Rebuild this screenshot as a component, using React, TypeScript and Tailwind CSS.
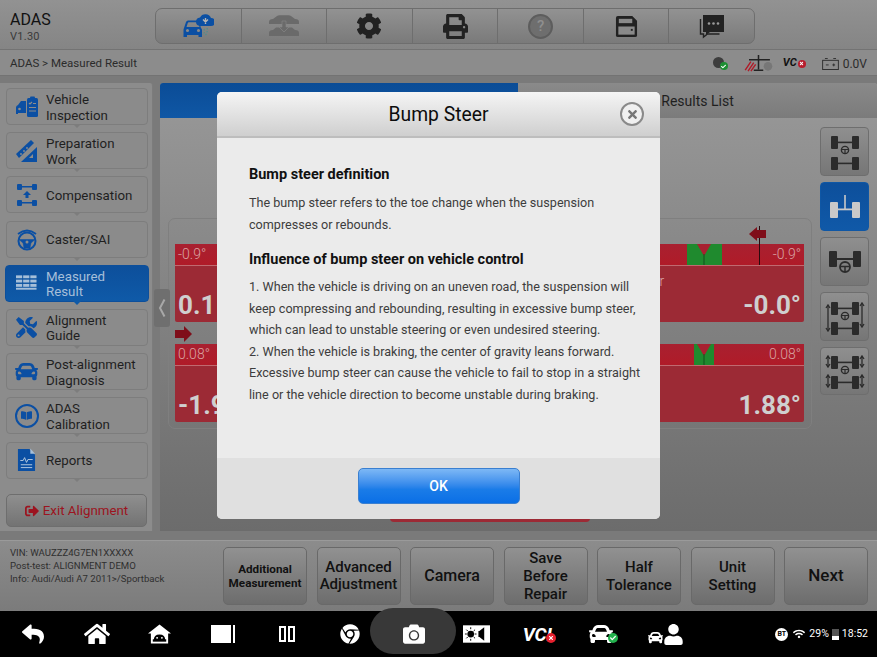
import type { ReactNode } from "react";
import { FaCog, FaPrint, FaCar, FaTools, FaBookOpen, FaReply, FaHome, FaCamera, FaChrome, FaWifi, FaSignOutAlt, FaTimes, FaUser, FaCheck } from "react-icons/fa";

const BLUE = "#0b4fa3";

function Axle({ steer, y = 0 }: { steer?: boolean; y?: number }) {
  return (
    <g transform={`translate(0 ${y})`}>
      <rect x="2" y="0" width="7" height="13" rx="1" />
      <rect x="23" y="0" width="7" height="13" rx="1" />
      <rect x="9" y="5.6" width="14" height="1.6" />
      {steer && (
        <g>
          <circle cx="16" cy="14" r="3.6" fill="none" stroke="currentColor" strokeWidth="1.4" />
          <path d="M12.500 13.500h7M16 14v3.500" stroke="currentColor" strokeWidth="1.200" />
        </g>
      )}
    </g>
  );
}

function FourWheel() {
  return (
    <svg viewBox="0 0 32 36" className="w-8 h-9 text-[#2b2b2b]" fill="currentColor">
      <Axle steer y={2} />
      <Axle y={23} />
    </svg>
  );
}

function TiltWheels({ spread }: { spread?: boolean }) {
  return (
    <svg viewBox="0 0 40 36" className="w-10 h-9 text-[#2b2b2b]" fill="currentColor">
      <g transform="translate(4 0)">
        <Axle steer y={3} />
        <Axle y={23} />
      </g>
      {spread ? (
        <g stroke="currentColor" strokeWidth="1.3">
          <path d="M3 4v9M37 4v9M3 23v10M37 23v10" />
          <path d="M1 6l2-3 2 3M1 11l2 3 2-3M35 6l2-3 2 3M35 11l2 3 2-3M1 25l2-3 2 3M1 31l2 3 2-3M35 25l2-3 2 3M35 31l2 3 2-3" fill="none" />
        </g>
      ) : (
        <g stroke="currentColor" strokeWidth="1.3">
          <path d="M3 7v24M37 5v22" />
          <path d="M1 9l2-3 2 3M1 29l2 3 2-3M35 7l2-3 2 3M35 25l2 3 2-3" fill="none" />
        </g>
      )}
    </svg>
  );
}

function CarCloudIcon() {
  return (
    <svg viewBox="0 0 32 26" className="w-[32px] h-[26px]" fill={BLUE}>
      <path d="M2 15l2-6q.6-1.5 2-1.5h9q1.4 0 2 1.5l2 6q1 .8 1 2v7h-3.500v-2H5v2H1.500v-7q0-1.200.5-2zM4.500 14h13l-1.300-4q-.2-.7-1-.7H6.800q-.8 0-1 .7z" />
      <circle cx="5.500" cy="17.500" r="1.500" fill="#8a8a8a" />
      <circle cx="16.500" cy="17.500" r="1.500" fill="#8a8a8a" />
      <path d="M14 9a4.500 4.500 0 0 1 4-4.500 6 6 0 0 1 11 .5 4 4 0 0 1 0 8H18q-4-.5-4-4z" />
      <path d="M23.500 5v6M21 6.500l2.500 2.500 2.500-2.500" stroke="#b5b5b5" strokeWidth="1.400" fill="none" />
      <path d="M22 16q1 3-1 6M25 15q1 4-2 8" stroke="#4a8f8f" strokeWidth="1.200" strokeDasharray="1.500 1.500" fill="none" />
    </svg>
  );
}

function CarsDownIcon() {
  return (
    <svg viewBox="0 0 32 26" className="w-8 h-[26px]" fill="#6a6a6a">
      <path d="M1 9q0-3 4-3l4-3q1-.8 2.500-.8h9q1.500 0 2.500.8l4 3q4 0 4 3v2H1z" />
      <path d="M1 20q0-3 4-3l3-2.500 3.500 0L16 19l4.500-4.500h3.500l3 2.500q4 0 4 3v3H1z" />
      <path d="M14 8h4v6h3l-5 5-5-5h3z" fill="#6a6a6a" stroke="#888" strokeWidth=".6" />
    </svg>
  );
}

function HelpIcon() {
  return (
    <div className="w-[25px] h-[25px] rounded-full border-2 border-[#5d5d5d] bg-[#6e6e6e] flex items-center justify-center text-[#8f8f8f] text-[15px] font-medium">?</div>
  );
}

function SaveIcon() {
  return (
    <svg viewBox="0 0 24 24" className="w-[23px] h-[23px]">
      <path d="M1 3q0-2 2-2h15l5 5v15q0 2-2 2H3q-2 0-2-2z" fill="#222" />
      <rect x="4" y="4" width="14" height="4.500" fill="#8a8a8a" />
      <rect x="3.500" y="12" width="17" height="8.500" fill="#8a8a8a" />
      <rect x="16.500" y="14.500" width="2" height="2" fill="#222" />
    </svg>
  );
}

function ChatIcon() {
  return (
    <svg viewBox="0 0 26 25" className="w-[26px] h-[25px]">
      <path d="M4 1h21v17H11l-4 3v-3H4z" fill="#222" />
      <path d="M1.500 5v15h3v3l4-3h12" fill="none" stroke="#222" strokeWidth="1.400" />
      <circle cx="10" cy="9.500" r="1.300" fill="#9a9a9a" />
      <circle cx="14.500" cy="9.500" r="1.300" fill="#9a9a9a" />
      <circle cx="19" cy="9.500" r="1.300" fill="#9a9a9a" />
    </svg>
  );
}

function InspectIcon() {
  return (
    <svg viewBox="0 0 24 24" className="w-6 h-6" fill={BLUE}>
      <path d="M11 6H6L3 10q-2 .5-2 2.500V19h2v-1h8z" />
      <circle cx="4.500" cy="14" r="1.300" fill="#8c8c8c" />
      <rect x="12" y="3" width="11" height="19" rx="1.500" />
      <rect x="15" y="1.500" width="5" height="3" rx="1" />
      <path d="M14 8l1 1 2-2M18 8.500h3M14 12.500h7M14 16h7" stroke="#8c8c8c" strokeWidth="1.200" fill="none" />
    </svg>
  );
}

function RulerIcon() {
  return (
    <svg viewBox="0 0 24 24" className="w-6 h-6" fill={BLUE}>
      <path d="M1 15L16 1l3 3L4 19z" />
      <path d="M22 8v15H6z" />
      <path d="M18 15v4h-4z" fill="#8c8c8c" />
      <circle cx="6" cy="15" r=".9" fill="#8c8c8c" />
      <circle cx="9" cy="12" r=".9" fill="#8c8c8c" />
      <circle cx="12" cy="9" r=".9" fill="#8c8c8c" />
    </svg>
  );
}

function CompensationIcon() {
  return (
    <svg viewBox="0 0 24 24" className="w-6 h-6" fill={BLUE}>
      <rect x="2" y="1" width="5" height="6" rx="1" />
      <rect x="17" y="1" width="5" height="6" rx="1" />
      <rect x="2" y="17" width="5" height="6" rx="1" />
      <rect x="17" y="17" width="5" height="6" rx="1" />
      <rect x="7" y="3" width="10" height="1.500" />
      <rect x="7" y="19" width="10" height="1.500" />
      <path d="M12 8l4 4h-2.500v3h-3v-3H8z" />
    </svg>
  );
}

function WheelIcon() {
  return (
    <svg viewBox="0 0 24 24" className="w-6 h-7" fill="none" stroke={BLUE}>
      <path d="M3 7q9-7 18 0" strokeWidth="1.800" />
      <circle cx="12" cy="14" r="8.500" strokeWidth="2" />
      <path d="M4 12.500h16l-4 3.500-1 5h-6l-1-5z" fill={BLUE} strokeWidth=".5" />
      <circle cx="12" cy="15" r="1.500" fill="#8c8c8c" stroke="none" />
    </svg>
  );
}

function TableIcon() {
  return (
    <svg viewBox="0 0 22 16" className="w-[21px] h-4" fill="#a6bfd9">
      <rect x="0" y="0" width="6.500" height="3" />
      <rect x="7.500" y="0" width="6.500" height="3" />
      <rect x="15" y="0" width="6.500" height="3" />
      <rect x="0" y="4.500" width="6.500" height="3" />
      <rect x="7.500" y="4.500" width="6.500" height="3" />
      <rect x="15" y="4.500" width="6.500" height="3" />
      <rect x="0" y="9" width="6.500" height="3" />
      <rect x="7.500" y="9" width="6.500" height="3" />
      <rect x="15" y="9" width="6.500" height="3" />
      <rect x="0" y="13" width="21.500" height="2" />
    </svg>
  );
}

function BookCircleIcon() {
  return (
    <div className="w-6 h-6 rounded-full border-2 border-[#0b4fa3] flex items-center justify-center">
      <FaBookOpen className="text-[#0b4fa3] text-[11px]" />
    </div>
  );
}

function ReportIcon() {
  return (
    <svg viewBox="0 0 20 25" className="w-[19px] h-6" fill={BLUE}>
      <path d="M1 1h12l6 6v17H1z" />
      <path d="M14 0.500l5 5.500h-5z" fill="#a6bfd9" />
      <path d="M3.500 13h3l1.500-3 2 5 1.500-3h5M4 17.500h12M4 20.500h12" stroke="#b7cbe0" strokeWidth="1" fill="none" />
    </svg>
  );
}

function DroidHomeIcon() {
  return (
    <svg viewBox="0 0 24 20" className="w-[23px] h-[20px]">
      <path d="M12 0L0 9.500h3V20h18V9.500h3z" fill="#fff" />
      <path d="M6 16.500q0-6 6-6t6 6z" fill="#000" />
      <rect x="5" y="15.500" width="14" height="2.500" fill="#000" />
      <circle cx="9.500" cy="14" r="1" fill="#fff" />
      <circle cx="14.500" cy="14" r="1" fill="#fff" />
    </svg>
  );
}

const sideItems: { label: ReactNode; icon: ReactNode; active?: boolean }[] = [
  { label: <>Vehicle<br />Inspection</>, icon: <InspectIcon /> },
  { label: <>Preparation<br />Work</>, icon: <RulerIcon /> },
  { label: "Compensation", icon: <CompensationIcon /> },
  { label: "Caster/SAI", icon: <WheelIcon /> },
  { label: <>Measured<br />Result</>, icon: <TableIcon />, active: true },
  { label: <>Alignment<br />Guide</>, icon: <FaTools className="text-[#0b4fa3] text-[21px]" /> },
  { label: <>Post-alignment<br />Diagnosis</>, icon: <FaCar className="text-[#0b4fa3] text-[23px]" /> },
  { label: <>ADAS<br />Calibration</>, icon: <BookCircleIcon /> },
  { label: "Reports", icon: <ReportIcon /> },
];

const topTools: ReactNode[] = [
  <CarCloudIcon />,
  <CarsDownIcon />,
  <FaCog className="text-[#222] text-[26px]" />,
  <FaPrint className="text-[#222] text-[25px]" />,
  <HelpIcon />,
  <SaveIcon />,
  <ChatIcon />,
];

const bottomButtons: { label: ReactNode; cls: string }[] = [
  { label: <>Additional<br />Measurement</>, cls: "text-[11.700px] leading-[14px] font-bold" },
  { label: <>Advanced<br />Adjustment</>, cls: "text-[15px] leading-[17px] font-medium" },
  { label: "Camera", cls: "text-[16px] font-medium" },
  { label: <>Save<br />Before<br />Repair</>, cls: "text-[15px] leading-[18px] font-medium" },
  { label: <>Half<br />Tolerance</>, cls: "text-[15px] leading-[18px] font-medium" },
  { label: <>Unit<br />Setting</>, cls: "text-[15px] leading-[18px] font-medium" },
  { label: "Next", cls: "text-[17px] font-medium" },
];

function Bar({ side, hdr, value, children }: { side: "l" | "r"; hdr: string; value: string; children?: ReactNode }) {
  return (
    <div className="flex-1 h-[78px] bg-[#9c2a35] rounded-[2px] flex flex-col">
      <div className={`h-[22px] relative bg-gradient-to-b from-[#a82030] to-[#b01b28] border-b border-[#c06a70] flex items-center text-[14px] font-light text-[#d9a3a3] px-[3px] ${side === "r" ? "justify-end" : ""}`}>
        {children}
        {hdr}
      </div>
      <div className={`flex-1 flex items-end pb-[2px] text-[#cfcfcf] text-[26px] leading-[30px] font-bold px-[3px] ${side === "r" ? "justify-end" : ""}`}>
        {value}
      </div>
    </div>
  );
}

function Green({ x, w }: { x: string; w: string }) {
  return (
    <div className={`absolute top-0 bottom-0 bg-[#1f8a2e] ${x} ${w}`}>
      <div className="absolute left-1/2 -translate-x-1/2 top-0 w-0 h-0 border-l-[7px] border-r-[7px] border-t-[12px] border-l-transparent border-r-transparent border-t-[#a82030]" />
      <div className="absolute left-1/2 -translate-x-1/2 top-[10px] bottom-0 w-px bg-[#14501d]" />
    </div>
  );
}

export default function App() {
  return (
    <div className="relative w-[877px] h-[657px] overflow-hidden bg-[#7a7a7a] text-[#1c1c1c] font-['Roboto',sans-serif]">
      {/* title bar */}
      <div className="h-[50px] flex bg-gradient-to-b from-[#929292] to-[#858585] border-b border-[#737373]">
        <div className="w-[155px] pl-[10px] pt-[11px]">
          <div className="text-[16px] leading-[18px] text-[#111]">ADAS</div>
          <div className="text-[11px] leading-[16px] text-[#3a3a3a] tracking-wide">V1.30</div>
        </div>
        <div className="mt-[8px] h-[36px] w-[600px] flex rounded-[7px] border border-[#6e6e6e] overflow-hidden bg-gradient-to-b from-[#929292] to-[#7a7a7a]">
          {topTools.map((t, i) => (
            <div key={i} className="flex-1 flex items-center justify-center border-r border-[#6e6e6e] last:border-r-0">{t}</div>
          ))}
        </div>
      </div>

      {/* breadcrumb */}
      <div className="h-[26px] flex items-center pl-[10px] pr-[10px] pt-[2px] bg-[#8c8c8c] border-b border-[#737373] text-[11.500px] text-[#2b2b2b]">
        <span>ADAS &gt; Measured Result</span>
        <div className="ml-auto flex items-center">
          <div className="relative w-[15px] h-[13px] mr-[15px]">
            <div className="w-[11px] h-[11px] rounded-full bg-[#3d3d3d]" />
            <div className="absolute right-0 bottom-0 w-[8px] h-[8px] rounded-full bg-[#1d8f33] flex items-center justify-center"><FaCheck className="text-white text-[5px]" /></div>
          </div>
          <svg viewBox="0 0 32 20" className="w-[31px] h-[19px] mr-[9px]">
            <path d="M16 1v15M6 6h22M11 17h10" stroke="#222" strokeWidth="1.600" fill="none" />
            <path d="M2 17l6-9M5 18l6-9M8 18l5-7" stroke="#b01b28" strokeWidth="1.500" />
            <circle cx="26" cy="13" r="4.500" fill="#777" />
          </svg>
          <span className="text-[11px] font-bold italic text-[#111] mr-[1px]">VC</span>
          <div className="w-[8px] h-[8px] rounded-full bg-[#b81c2c] mr-[16px] flex items-center justify-center"><FaTimes className="text-white text-[5px]" /></div>
          <svg viewBox="0 0 18 13" className="w-[17px] h-[12px] mr-[4px]" fill="none" stroke="#2b2b2b" strokeWidth="1">
            <rect x=".5" y="2.500" width="17" height="10" />
            <path d="M3 .5h3M12 .5h3M4 7.500h3M11 7.500h3M12.500 6v3" />
          </svg>
          <span className="text-[12px] text-[#2b2b2b]">0.0V</span>
        </div>
      </div>

      {/* main area */}
      <div className="h-[464px] flex pt-[7px] pb-[9px]">
        <div className="w-[153px] bg-[#8c8c8c] pt-[5px] pl-[6px] pr-[4px] rounded-tr-[3px] flex flex-col gap-[7.2px] border-r border-[#7c7c7c]">
          {sideItems.map((it, i) => (
            <div
              key={i}
              className={`relative h-[37px] shrink-0 flex items-center rounded-[4px] border ${it.active ? "-mx-[1px] pl-[1px] bg-gradient-to-b from-[#0d4f9b] to-[#0f5aa8] border-[#0d4f9b] text-[#a6bfd9]" : "bg-[#8b8b8b] border-[#7d7d7d] text-[#1f1f1f]"}`}
            >
              <div className="w-[39px] flex items-center justify-center shrink-0">{it.icon}</div>
              <div className="text-[13.300px] leading-[15.500px] pt-[2px]">{it.label}</div>
              <div className={`absolute left-1/2 -translate-x-1/2 -bottom-[4px] w-0 h-0 border-l-[4px] border-r-[4px] border-t-[4px] border-l-transparent border-r-transparent ${it.active ? "border-t-[#0f5aa8]" : "border-t-[#7d7d7d]"}`} />
            </div>
          ))}
          <div className="mt-[8px] h-[33px] w-[141px] flex items-center justify-center gap-[4px] pt-[2px] rounded-[5px] border border-[#6e6e6e] bg-gradient-to-b from-[#8f8f8f] to-[#737373] text-[#9c1420] text-[13.300px]">
            <FaSignOutAlt className="text-[14px]" />
            <span>Exit Alignment</span>
          </div>
        </div>

        <div className="flex-1 ml-[7px] flex flex-col rounded-t-[3px] overflow-hidden bg-gradient-to-b from-[#999999] to-[#6c6c6c]">
          <div className="h-[35px] shrink-0 flex">
            <div className="w-[358px] bg-gradient-to-b from-[#0b4c96] to-[#0f57a5]" />
            <div className="flex-1 flex items-center justify-center pt-[2px] bg-gradient-to-b from-[#8a8a8a] to-[#7b7b7b] text-[14px] text-[#1f1f1f]">Results List</div>
          </div>
          <div className="flex-1 flex pl-[8px]">
            <div className="w-[644px] pt-[100px] flex flex-col items-center">
              <div className="relative w-full h-[211px] rounded-[7px] border border-[#7f7f7f] pt-[25px] pl-[6px] pr-[7px] flex flex-col gap-[22px]">
                <div className="flex gap-[10px]">
                  <Bar side="l" hdr="-0.9°" value="0.1" />
                  <Bar side="r" hdr="-0.9°" value="-0.0°">
                    <Green x="left-[192px]" w="w-[35px]" />
                    <div className="absolute left-[264px] -top-[18px] bottom-0 w-px bg-[#2a0a0e]" />
                    <div className="absolute left-[254px] -top-[17px] flex items-center">
                      <div className="w-0 h-0 border-y-[7px] border-y-transparent border-r-[8px] border-r-[#7f0e1a]" />
                      <div className="w-[9px] h-[8px] bg-[#7f0e1a]" />
                    </div>
                    <span className="absolute left-[165px] top-[27px] text-[14px] text-[#d9a3a3]">r</span>
                  </Bar>
                </div>
                <div className="flex gap-[10px]">
                  <Bar side="l" hdr="0.08°" value="-1.90°" />
                  <Bar side="r" hdr="0.08°" value="1.88°">
                    <Green x="left-[199px]" w="w-[20px]" />
                  </Bar>
                </div>
                <div className="absolute left-[6px] top-[107px] flex items-center">
                  <div className="w-[9px] h-[8px] bg-[#7f0e1a]" />
                  <div className="w-0 h-0 border-y-[8px] border-y-transparent border-l-[8px] border-l-[#7f0e1a]" />
                </div>
              </div>
              <div className="mt-[61px] w-[200px] h-[32px] rounded-[4px] bg-[#9c2a35]" />
            </div>
            <div className="ml-[8px] pt-[9px] flex flex-col gap-[6px]">
              <div className="w-[49px] h-[49px] rounded-[4px] border border-[#6e6e6e] bg-gradient-to-b from-[#8f8f8f] to-[#767676] flex items-center justify-center"><FourWheel /></div>
              <div className="w-[49px] h-[49px] rounded-[4px] border border-[#0f57a5] bg-gradient-to-b from-[#0d4f9b] to-[#1059a8] flex items-center justify-center">
                <svg viewBox="0 0 32 26" className="w-8 h-[26px]" fill="#c9c9c9">
                  <rect x="1" y="8" width="8" height="16" rx="1" />
                  <rect x="23" y="8" width="8" height="16" rx="1" />
                  <rect x="9" y="14.500" width="14" height="1.800" />
                  <rect x="15.200" y="1" width="1.600" height="14" />
                </svg>
              </div>
              <div className="w-[49px] h-[49px] rounded-[4px] border border-[#6e6e6e] bg-gradient-to-b from-[#8f8f8f] to-[#767676] flex items-center justify-center">
                <svg viewBox="0 0 34 24" className="w-[34px] h-6 text-[#2b2b2b]" fill="currentColor">
                  <rect x="1" y="1" width="8" height="16" rx="1" />
                  <rect x="25" y="1" width="8" height="16" rx="1" />
                  <rect x="9" y="8" width="16" height="2" />
                  <circle cx="17" cy="17" r="5" fill="none" stroke="currentColor" strokeWidth="1.800" />
                  <path d="M12.500 16.500h9M17 17v5" stroke="currentColor" strokeWidth="1.500" />
                </svg>
              </div>
              <div className="w-[49px] h-[49px] rounded-[4px] border border-[#6e6e6e] bg-gradient-to-b from-[#8f8f8f] to-[#767676] flex items-center justify-center"><TiltWheels /></div>
              <div className="w-[49px] h-[48px] rounded-[4px] border border-[#6e6e6e] bg-gradient-to-b from-[#8f8f8f] to-[#767676] flex items-center justify-center"><TiltWheels spread /></div>
            </div>
          </div>
        </div>
      </div>

      {/* sidebar collapse handle */}
      <div className="absolute left-[154px] top-[289px] w-[16px] h-[38px] rounded-[3px] bg-[#6f6f6f] flex items-center justify-center">
        <svg viewBox="0 0 8 20" className="w-[8px] h-[20px]" fill="none" stroke="#a8a8a8" strokeWidth="2">
          <path d="M6.500 1.500L2 10l4.500 8.500" />
        </svg>
      </div>

      {/* info + action buttons */}
      <div className="h-[71px] flex items-center bg-gradient-to-b from-[#8c8c8c] to-[#7b7b7b] border-t border-[#9a9a9a]">
        <div className="w-[223px] shrink-0 pl-[10px] pb-[22px] text-[9.600px] leading-[13px] text-[#2f2f2f]">
          <div>VIN: WAUZZZ4G7EN1XXXXX</div>
          <div>Post-test: ALIGNMENT DEMO</div>
          <div>Info: Audi/Audi A7 2011&gt;/Sportback</div>
        </div>
        <div className="flex gap-[9.500px]">
          {bottomButtons.map((b, i) => (
            <div key={i} className={`w-[84px] h-[58px] shrink-0 flex items-center justify-center text-center rounded-[5px] border border-[#696969] bg-gradient-to-b from-[#919191] to-[#6d6d6d] text-[#111] ${b.cls}`}>
              <span>{b.label}</span>
            </div>
          ))}
        </div>
      </div>

      {/* android nav */}
      <div className="h-[46px] bg-black flex items-center pl-[1.500px] text-white">
        <div className="w-[63.400px] flex justify-center"><FaReply className="text-[22px]" /></div>
        <div className="w-[63.400px] flex justify-center"><FaHome className="text-[26px]" /></div>
        <div className="w-[63.400px] flex justify-center"><DroidHomeIcon /></div>
        <div className="w-[63.400px] flex justify-center items-center gap-[2px]">
          <div className="w-[20px] h-[18px] bg-white" />
          <div className="w-[2px] h-[18px] bg-white" />
        </div>
        <div className="w-[63.400px] flex justify-center gap-[2px]">
          <div className="w-[7px] h-[16px] border-2 border-white" />
          <div className="w-[7px] h-[16px] border-2 border-white" />
        </div>
        <div className="w-[63.400px] flex justify-center"><FaChrome className="text-[20px]" /></div>
        <div className="relative w-[63.400px] flex justify-center">
          <div className="absolute -top-[15px] left-[-12px] w-[86px] h-[46px] rounded-[23px] bg-[#383838]" />
          <FaCamera className="relative text-[22px]" />
        </div>
        <div className="w-[63.400px] flex justify-center">
          <svg viewBox="0 0 28 18" className="w-[27px] h-[18px]">
            <rect x="0" y="0" width="28" height="18" fill="#fff" />
            <circle cx="8" cy="9" r="3.500" fill="#000" />
            <path d="M8 2v2M8 14v2M2 9h2M12 9h2M3.500 4.500l1.500 1.500M11 12l1.500 1.500M3.500 13.500L5 12M11 6l1.500-1.500" stroke="#000" strokeWidth="1" />
            <path d="M17 6l5-4v14l-5-4h-1V6z" fill="#000" />
          </svg>
        </div>
        <div className="relative w-[63.400px] flex justify-center">
          <span className="text-[19px] font-bold italic leading-none pr-[6px]">VCI</span>
          <div className="absolute left-[37px] top-[8px] w-[10px] h-[10px] rounded-full bg-[#e5202e] flex items-center justify-center"><FaTimes className="text-white text-[6px]" /></div>
        </div>
        <div className="relative w-[58px] flex justify-center">
          <FaCar className="text-[24px]" />
          <div className="absolute left-[36px] top-[11px] w-[10px] h-[10px] rounded-full bg-[#22b14c] flex items-center justify-center"><FaCheck className="text-white text-[6px]" /></div>
        </div>
        <div className="w-[72px] flex justify-center items-end gap-0">
          <FaCar className="text-[15px]" />
          <FaUser className="text-[21px]" />
        </div>
        <div className="ml-auto pr-[9px] flex items-center text-[10.500px] gap-[3px]">
          <div className="w-[13px] h-[13px] rounded-full bg-white text-black text-[7px] font-bold flex items-center justify-center">BT</div>
          <FaWifi className="text-[12px] ml-[2px]" />
          <span className="ml-[1px]">29%</span>
          <div className="w-[7px] h-[11px] bg-gradient-to-b from-[#555555] from-60% to-white to-60%" />
          <span>18:52</span>
        </div>
      </div>

      {/* dialog */}
      <div className="absolute left-[217px] top-[92px] w-[443px] h-[427px] rounded-[5px] overflow-hidden flex flex-col bg-[#ebebeb]">
        <div className="relative h-[46px] shrink-0 pt-[2px] bg-gradient-to-b from-[#f5f5f5] to-[#cfcfcf] border-b-2 border-[#bdbdbd] flex items-center justify-center text-[19.300px] text-[#0c0c0c]">
          Bump Steer
          <div className="absolute left-[403px] top-[10px] w-[24px] h-[24px] rounded-full border-2 border-[#8a8a8a] flex items-center justify-center bg-[#f0f0f0]">
            <FaTimes className="text-[#777777] text-[13px]" />
          </div>
        </div>
        <div className="flex-1 pl-[32px] pr-[10px] pt-[27px] text-[12.600px] leading-[21.500px] text-[#3d3d3d]">
          <div className="text-[14.500px] font-bold text-[#111] leading-[20px]">Bump steer definition</div>
          <div className="mt-[7px]">The bump steer refers to the toe change when the suspension<br />compresses or rebounds.</div>
          <div className="mt-[15px] text-[14.500px] font-bold text-[#111] leading-[20px]">Influence of bump steer on vehicle control</div>
          <div className="mt-[6px]">
            1. When the vehicle is driving on an uneven road, the suspension will<br />
            keep compressing and rebounding, resulting in excessive bump steer,<br />
            which can lead to unstable steering or even undesired steering.<br />
            2. When the vehicle is braking, the center of gravity leans forward.<br />
            Excessive bump steer can cause the vehicle to fail to stop in a straight<br />
            line or the vehicle direction to become unstable during braking.
          </div>
        </div>
        <div className="h-[61px] shrink-0 bg-[#e0e0e0] flex items-start justify-center pt-[10px]">
          <div className="w-[162px] h-[36px] rounded-[5px] border border-[#3a7fd0] bg-gradient-to-b from-[#7db8f5] via-[#1a7ce8] via-60% to-[#0a6fe6] flex items-center justify-center text-white text-[14px] font-medium">OK</div>
        </div>
      </div>
    </div>
  );
}
